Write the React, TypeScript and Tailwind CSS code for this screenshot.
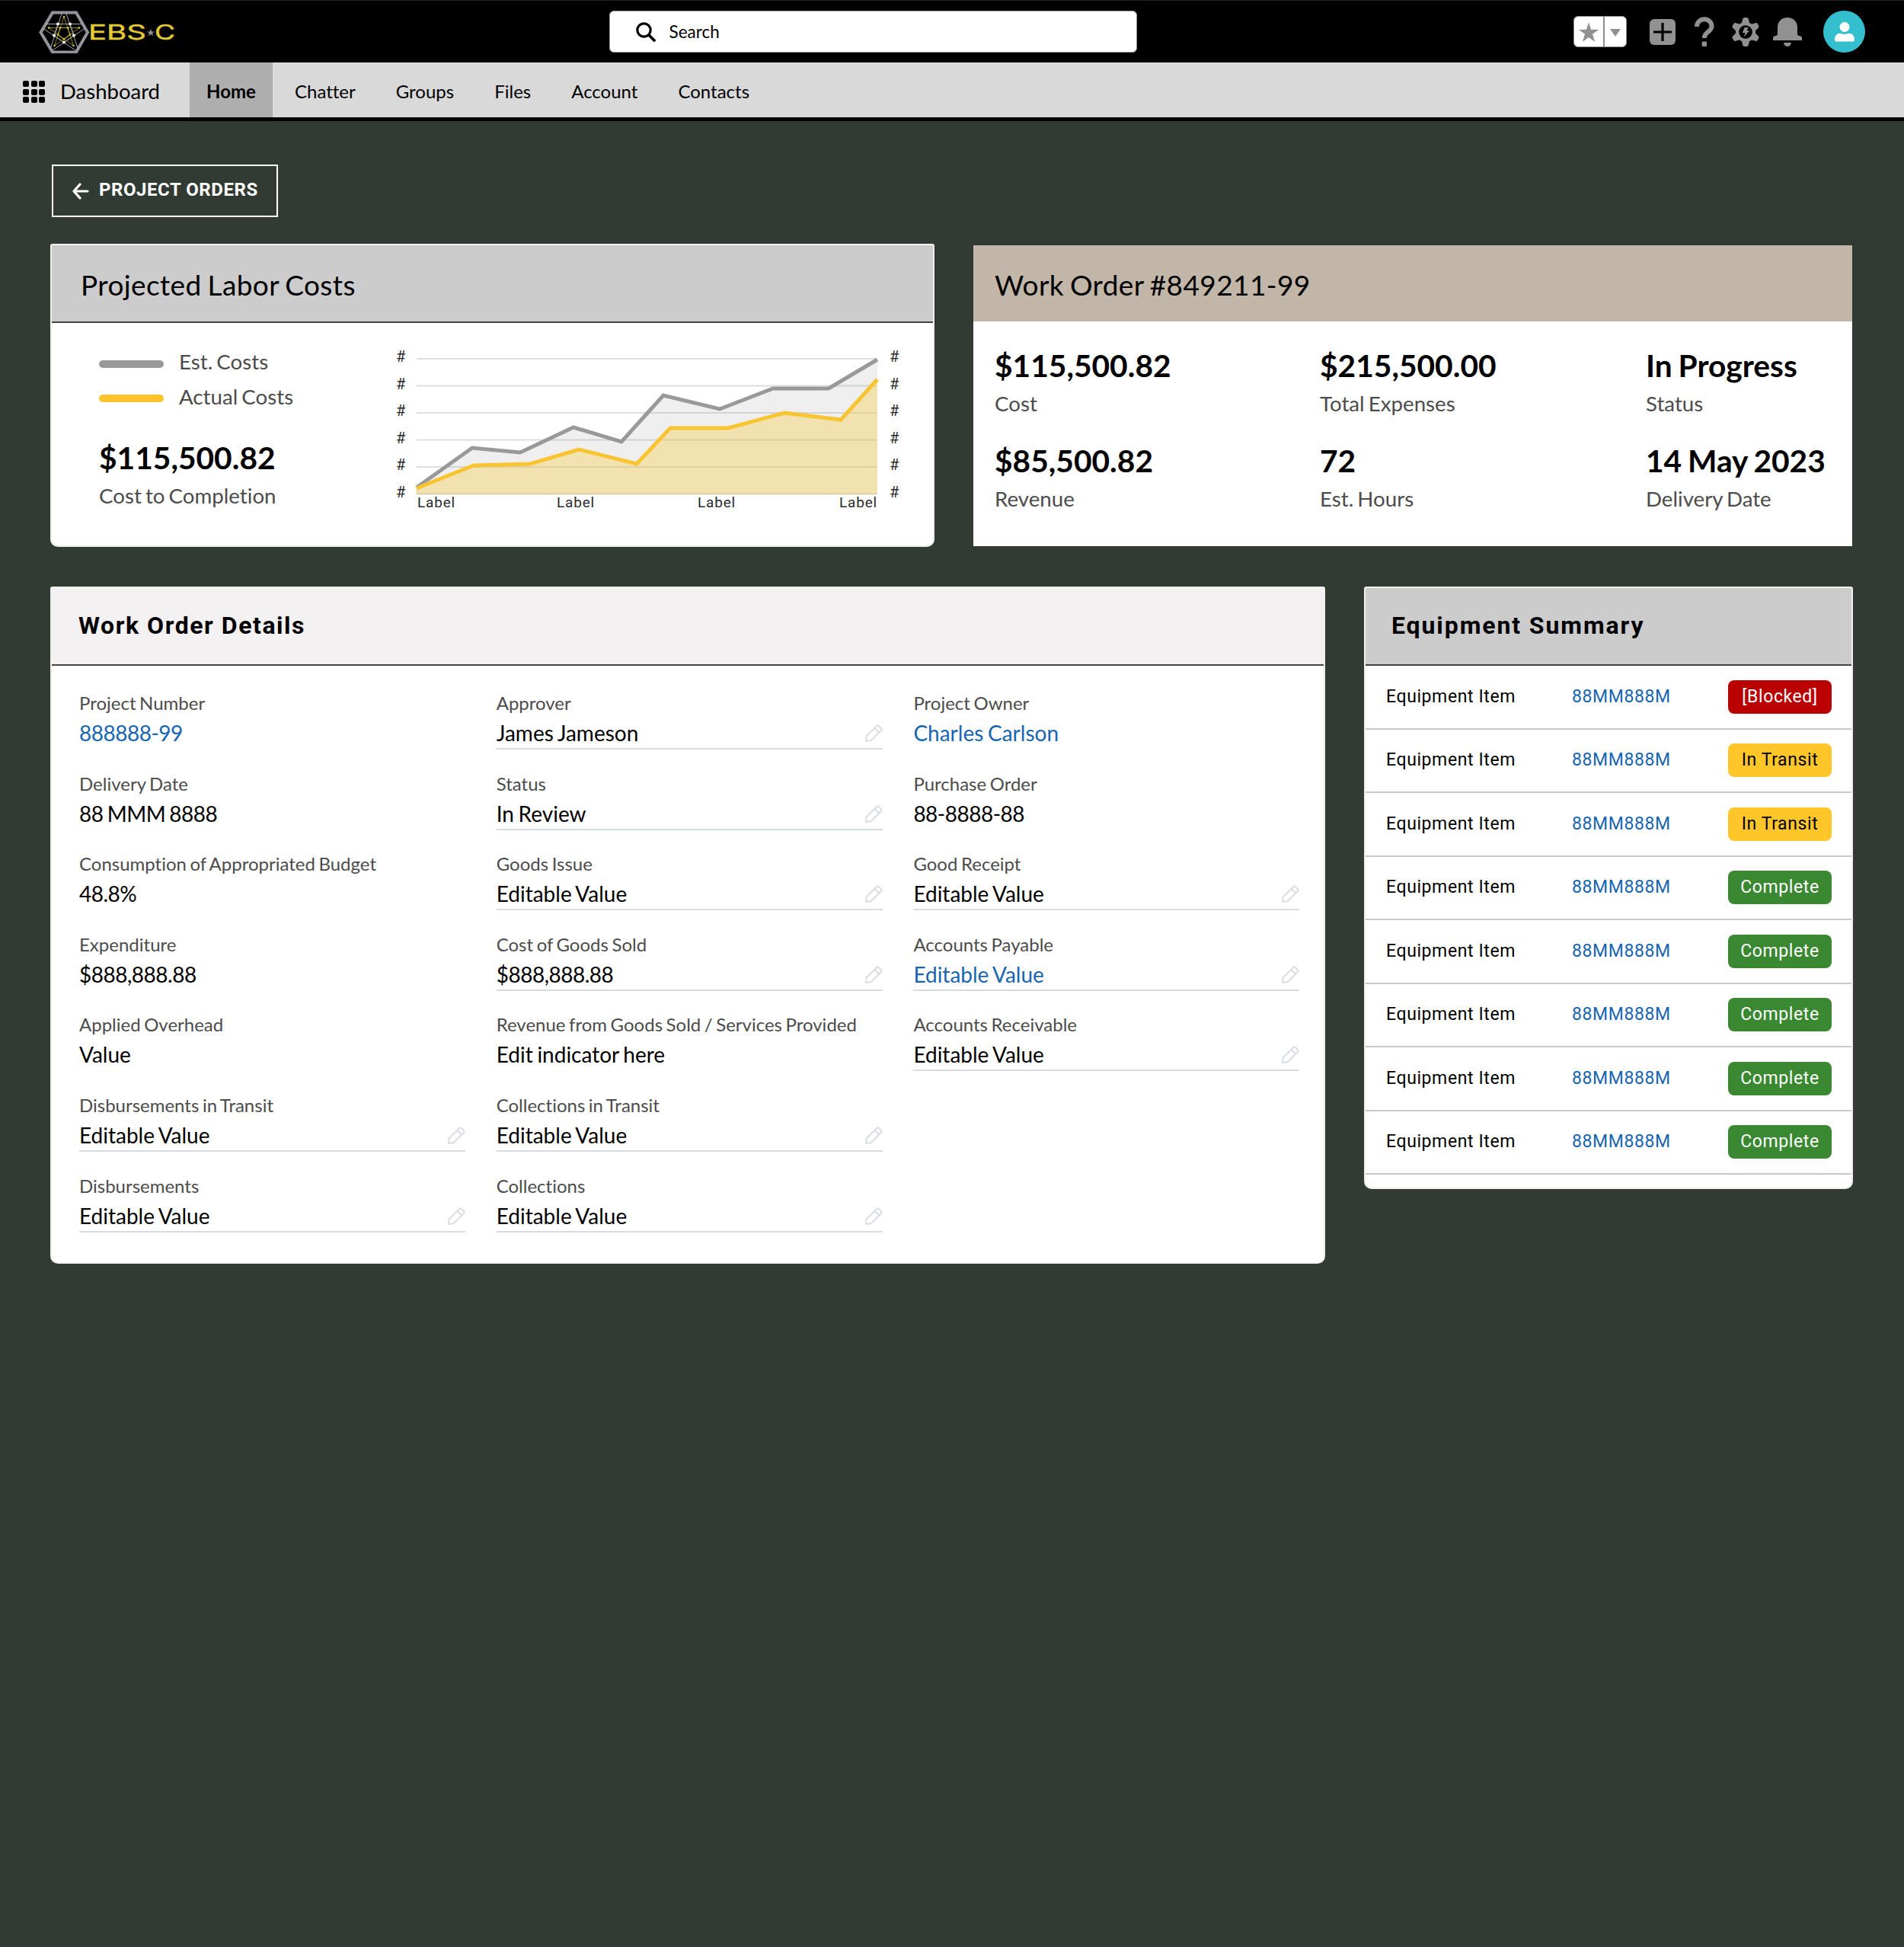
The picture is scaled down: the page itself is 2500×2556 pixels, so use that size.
import React from "react";

const navItems = ["Chatter", "Groups", "Files", "Account", "Contacts"];

const orderStats = [
  { value: "$115,500.82", label: "Cost" },
  { value: "$215,500.00", label: "Total Expenses" },
  { value: "In Progress", label: "Status" },
  { value: "$85,500.82", label: "Revenue" },
  { value: "72", label: "Est. Hours" },
  { value: "14 May 2023", label: "Delivery Date" },
];

type FieldProps = {
  label: string;
  value: string;
  link?: boolean;
  line?: boolean;
  edit?: boolean;
};

const columns: FieldProps[][] = [
  [
    { label: "Project Number", value: "888888-99", link: true },
    { label: "Delivery Date", value: "88 MMM 8888" },
    { label: "Consumption of Appropriated Budget", value: "48.8%" },
    { label: "Expenditure", value: "$888,888.88" },
    { label: "Applied Overhead", value: "Value" },
    { label: "Disbursements in Transit", value: "Editable Value", line: true, edit: true },
    { label: "Disbursements", value: "Editable Value", line: true, edit: true },
  ],
  [
    { label: "Approver", value: "James Jameson", line: true, edit: true },
    { label: "Status", value: "In Review", line: true, edit: true },
    { label: "Goods Issue", value: "Editable Value", line: true, edit: true },
    { label: "Cost of Goods Sold", value: "$888,888.88", line: true, edit: true },
    { label: "Revenue from Goods Sold / Services Provided", value: "Edit indicator here" },
    { label: "Collections in Transit", value: "Editable Value", line: true, edit: true },
    { label: "Collections", value: "Editable Value", line: true, edit: true },
  ],
  [
    { label: "Project Owner", value: "Charles Carlson", link: true },
    { label: "Purchase Order", value: "88-8888-88" },
    { label: "Good Receipt", value: "Editable Value", line: true, edit: true },
    { label: "Accounts Payable", value: "Editable Value", link: true, line: true, edit: true },
    { label: "Accounts Receivable", value: "Editable Value", line: true, edit: true },
  ],
];

const equipment = [
  "[Blocked]",
  "In Transit",
  "In Transit",
  "Complete",
  "Complete",
  "Complete",
  "Complete",
  "Complete",
];

const badgeColors: Record<string, string> = {
  "[Blocked]": "bg-[#ba0202] text-white",
  "In Transit": "bg-[#fec629] text-black",
  Complete: "bg-[#3a8832] text-white",
};

const Logo = () => (
  <svg width="180" height="56" viewBox="51 13 180 56" className="shrink-0">
    <polygon points="53.5,41.5 69,15.5 100,15.5 115,41.5 100,67.5 69,67.5" fill="none" stroke="#93949b" strokeWidth="4" />
    <g stroke="#b5b5b5" strokeWidth="0.9" fill="none">
      <path d="M60 30.5H108M81 17L66.500 62M87 17L102 62M57 36.500L99 65M111 36.500L69 65" />
      <path d="M76 30.500L71 45.500L84 54.500L97 45.500L92 30.500" />
    </g>
    <path d="M84 21L71.500 59L104 35.500H64L96.500 59Z" fill="none" stroke="#8f7f22" strokeWidth="1" />
    <path d="M79 35.500H89L92 44.500L84 50.500L76 44.500Z" fill="none" stroke="#b8a428" strokeWidth="1.1" />
    <g fill="#e6cf35">
      {[[84, 21], [64, 35.5], [104, 35.5], [71.5, 59], [96.5, 59], [79, 35.5], [89, 35.5], [76, 44.5], [92, 44.5], [84, 50.5]].map(([x, y]) => (
        <circle key={`${x}-${y}`} cx={x} cy={y} r="1.2" />
      ))}
    </g>
    <g fill="#ffffff">
      {[[76, 30.5], [92, 30.5], [71, 45.5], [97, 45.5], [84, 54.5]].map(([x, y]) => (
        <circle key={`${x}-${y}`} cx={x} cy={y} r="1.9" />
      ))}
    </g>
    <g fill="#e3c935" stroke="#e3c935" strokeWidth="0.4" fontFamily="Inter, sans-serif" fontSize="27">
      <text x="116" y="51" textLength="76" lengthAdjust="spacingAndGlyphs">EBS</text>
      <text x="203" y="51" textLength="27" lengthAdjust="spacingAndGlyphs">C</text>
    </g>
    <polygon points="198,37 199.300,40.400 203,40.500 200.100,42.700 201.200,46.200 198,44.100 194.800,46.200 195.900,42.700 193,40.500 196.700,40.400" fill="#8c8c8c" />
  </svg>
);

const HeaderIcons = () => (
  <div className="flex items-center">
    <div className="flex h-[41px] w-[70px] rounded-[6px] border border-[#8f8f8f] bg-white">
      <div className="flex w-[40px] items-center justify-center border-r-2 border-[#8f8f8f]">
        <svg width="26" height="26" viewBox="0 0 26 26" fill="#919191">
          <polygon points="13,0 16,9.700 26,9.900 18,15.800 21.200,26 13,20 4.800,26 8,15.800 0,9.900 10,9.700" />
        </svg>
      </div>
      <div className="flex flex-1 items-center justify-center pt-0.5">
        <svg width="14" height="10" viewBox="0 0 14 10" fill="#919191">
          <polygon points="0,0 14,0 7,10" />
        </svg>
      </div>
    </div>
    <svg width="34" height="34" viewBox="0 0 34 34" className="ml-[30px]">
      <rect width="34" height="34" rx="6" fill="#919191" />
      <path d="M17 5v24M5 17h24" stroke="#000" strokeWidth="3.200" />
    </svg>
    <svg width="26" height="40" viewBox="0 0 26 40" className="ml-[25px]">
      <path d="M3 13C3 7 7.500 3.300 13 3.300S22.500 7.500 22.500 12.500C22.500 20 12.800 19.500 12.800 28" fill="none" stroke="#919191" strokeWidth="6" />
      <rect x="9.700" y="32.500" width="6.300" height="6.500" rx="1" fill="#919191" />
    </svg>
    <svg width="38" height="40" viewBox="-19 -20 38 40" className="ml-[22px]">
      {[0, 60, 120, 180, 240, 300].map((a) => (
        <path key={a} d="M-5.500 -10L-3.800 -17Q-3.400 -19 -1.500 -19H1.500Q3.400 -19 3.800 -17L5.500 -10Z" transform={`rotate(${a})`} fill="#919191" />
      ))}
      <circle r="13" fill="#919191" />
      <circle r="8.800" fill="#000" />
      <path d="M-1.200 -6H3.500L1.600 -1.800H5L-2.200 6.500L-0.400 1H-4.200Z" fill="#919191" />
    </svg>
    <svg width="38" height="40" viewBox="0 0 38 40" className="ml-[17px]">
      <path d="M19 1C26.500 1 32 6.300 32 13.500V22C32 24.500 33 25 36 25.300Q38 25.800 38 28V31H0V28Q0 25.800 2 25.300C5 25 6 24.500 6 22V13.500C6 6.300 11.500 1 19 1Z" fill="#919191" />
      <path d="M14 34H24Q23 39 19 39T14 34Z" fill="#919191" />
    </svg>
    <div className="ml-[28px] flex size-[55px] items-center justify-center rounded-full bg-[#34bfce]">
      <svg width="26" height="26" viewBox="0 0 26 26" fill="#fff">
        <circle cx="13" cy="6.500" r="6.500" />
        <path d="M0 23C0 17 4 14.800 7.500 14.800C9.500 16.200 16.500 16.200 18.500 14.800C22 14.800 26 17 26 23Q26 25.500 23.500 25.500H2.500Q0 25.500 0 23Z" />
      </svg>
    </div>
  </div>
);

const CostChart = () => {
  const gridY = [471, 506.5, 542, 577.5, 613, 648.5];
  const est = "547,640 620,588 683,594 753,561 816,580 871,519 945,537 1015,510 1088,510 1152,472";
  const actual = "547,641 622,611 696,609 760,590 836,609 880,562 956,562 1030,542 1104,551 1152,498";
  return (
    <svg width="678" height="230" viewBox="512 450 678 230">
      {gridY.map((y) => (
        <path key={y} d={`M547 ${y}H1151`} stroke="#dedede" strokeWidth="2" />
      ))}
      <polygon points={`${est} 1152,649 546,649`} fill="#999999" fillOpacity="0.16" />
      <polygon points={`${actual} 1152,649 546,649`} fill="#f7c935" fillOpacity="0.34" />
      <polyline points={est} fill="none" stroke="#999999" strokeWidth="5" />
      <polyline points={actual} fill="none" stroke="#f9c432" strokeWidth="5" />
      <g fontFamily="Roboto, sans-serif" fontSize="19" fill="#2b2b2b">
        {gridY.map((y) => (
          <React.Fragment key={y}>
            <text x="520" y={y + 4} fontSize="20">#</text>
            <text x="1168" y={y + 4} fontSize="20">#</text>
          </React.Fragment>
        ))}
        {[548, 731, 916, 1102].map((x) => (
          <text key={x} x={x} y="666" letterSpacing="0.8">Label</text>
        ))}
      </g>
    </svg>
  );
};

const Pencil = () => (
  <svg width="23" height="23" viewBox="0 0 23 23" fill="none" stroke="#dadde2" strokeWidth="2" strokeLinejoin="round">
    <path d="M1.500 15.500L15.500 1.700Q16.500 .900 17.500 1.700L21.300 5.500Q22 6.500 21.300 7.500L7.500 21.300L1 22Z" />
    <path d="M12.500 4.700L18.300 10.500" />
  </svg>
);

const Field = ({ label, value, link, line, edit }: FieldProps) => (
  <div className="h-[105.6px]">
    <div className="h-[30px] text-[24px] leading-[30px] whitespace-nowrap text-[#4c4c4c] [word-spacing:-1.6px]">{label}</div>
    <div className={`mt-[5px] flex h-[41px] items-center justify-between border-b-2 ${line ? "border-[#d9dde3]" : "border-transparent"}`}>
      <span
        className={`text-[28px] leading-[39px] [word-spacing:-1.5px] ${/^[$\d]/.test(value) ? "tracking-[-0.5px]" : ""} ${link ? "text-[#1765b0]" : "text-black"}`}
      >
        {value}
      </span>
      {edit && <Pencil />}
    </div>
  </div>
);

const App = () => {
  return (
    <div className="min-h-[2556px] w-[2500px] bg-[#323b33] font-[Lato,sans-serif] text-black [font-variant-ligatures:none]">
      <header className="flex h-[82px] items-center justify-between border-t border-[#222] bg-black pr-[51px] pl-[51px]">
        <Logo />
        <div className="ml-[-5px] flex h-[55px] w-[693px] items-center rounded-[6px] border border-[#999] bg-white pl-[34px]">
          <svg width="26" height="26" viewBox="0 0 26 26" fill="none" stroke="#000">
            <circle cx="10.500" cy="10.500" r="8.700" strokeWidth="3.200" />
            <path d="M17 17L24 24" strokeWidth="3.800" strokeLinecap="round" />
          </svg>
          <span className="ml-[18px] text-[22.5px]">Search</span>
        </div>
        <HeaderIcons />
      </header>

      <nav className="flex h-[77px] border-b-[5px] border-black bg-[#d9d9d9] text-[24px]">
        <div className="flex w-[249px] items-center pl-[30px]">
          <div className="mt-[5px] grid grid-cols-3 gap-[2.5px]">
            {Array.from({ length: 9 }, (_, i) => (
              <div key={i} className="size-[8px] rounded-[2px] bg-black" />
            ))}
          </div>
          <span className="ml-[20px] pt-1 text-[27.5px]">Dashboard</span>
        </div>
        <div className="flex w-[109px] items-center justify-center bg-[#aeaeae] pt-1 font-bold">Home</div>
        <div className="flex items-center gap-[53px] pt-1 pl-[29px]">
          {navItems.map((item) => (
            <span key={item}>{item}</span>
          ))}
        </div>
      </nav>

      <main className="pt-[57px] pr-[67px] pl-[66px]">
        <button className="ml-[2px] flex h-[69px] w-[297px] items-center border-2 border-white pl-[25px] font-[Roboto,sans-serif] text-[24px] font-bold text-white">
          <svg width="22" height="22" viewBox="0 0 22 22" fill="none" stroke="#fff" strokeWidth="3.200" strokeLinecap="round" strokeLinejoin="round">
            <path d="M10 2L2 11L10 20M2.500 11H20" />
          </svg>
          <span className="ml-[13px] pb-[3px] tracking-[0.55px] whitespace-nowrap">PROJECT ORDERS</span>
        </button>

        <div className="mt-[35px] flex gap-[51px]">
          <section className="h-[398px] w-[1161px] overflow-hidden rounded-t-[3px] rounded-b-[10px] border-2 border-[#efefef] bg-white">
            <h2 className="flex h-[102px] items-center border-b-2 border-[#444] bg-[#cccccc] pt-1 pl-[38px] text-[37px] tracking-[0.4px] [word-spacing:-2px]">
              Projected Labor Costs
            </h2>
            <div className="flex pl-[62px]">
              <div className="w-[382px] pt-[31px] text-[27.7px] text-[#4c4c4c] [word-spacing:-2px]">
                <div className="flex h-[45px] items-center">
                  <div className="h-[10px] w-[85px] rounded-full bg-[#999999]" />
                  <span className="-mt-1.5 ml-[20px]">Est. Costs</span>
                </div>
                <div className="flex h-[45px] items-center">
                  <div className="h-[10px] w-[85px] rounded-full bg-[#fcc42c]" />
                  <span className="-mt-1 ml-[20px]">Actual Costs</span>
                </div>
                <div className="mt-[32px] text-[40.7px] leading-[48px] font-bold text-black">$115,500.82</div>
                <div className="mt-2 leading-[36px]">Cost to Completion</div>
              </div>
              <div className="pt-[26px]">
                <CostChart />
              </div>
            </div>
          </section>

          <section className="mt-[2px] h-[395px] w-[1154px] bg-white">
            <h2 className="flex h-[100px] items-center bg-[#c1b6a8] pt-1 pl-[28px] text-[37px] tracking-[0.4px] [word-spacing:-2px]">
              Work Order #849211-99
            </h2>
            <div className="grid grid-cols-[427px_428px_1fr] pt-[34px] pl-[28px]">
              {orderStats.map((s) => (
                <div key={s.label} className="h-[124.5px] whitespace-nowrap [word-spacing:-2px]">
                  <div className="text-[40.7px] leading-[48px] font-bold">{s.value}</div>
                  <div className="mt-[7px] text-[27.7px] leading-[37px] text-[#4c4c4c]">{s.label}</div>
                </div>
              ))}
            </div>
          </section>
        </div>

        <div className="mt-[52px] flex items-start gap-[51px]">
          <section className="h-[889px] w-[1674px] overflow-hidden rounded-t-[3px] rounded-b-[10px] border-2 border-[#efefef] bg-white">
            <h2 className="flex h-[102px] items-center border-b-2 border-[#444] bg-[#f3f1f1] pb-[2px] pl-[35px] font-[Roboto,sans-serif] text-[32px] font-bold tracking-[1.55px]">
              Work Order Details
            </h2>
            <div className="flex gap-[40.7px] pt-[34px] pl-[36px]">
              {columns.map((fields, i) => (
                <div key={i} className="w-[507px]">
                  {fields.map((f) => (
                    <Field key={f.label} {...f} />
                  ))}
                </div>
              ))}
            </div>
          </section>

          <section className="h-[791px] w-[642px] overflow-hidden rounded-t-[3px] rounded-b-[10px] border-2 border-[#efefef] bg-white font-[Roboto,sans-serif]">
            <h2 className="flex h-[102px] items-center border-b-2 border-[#444] bg-[#cccccc] pb-[2px] pl-[34px] text-[32px] font-bold tracking-[1.9px]">
              Equipment Summary
            </h2>
            {equipment.map((status, i) => (
              <div key={i} className="flex h-[83.5px] items-center border-b-2 border-[#c9c9c9] pr-[26px] pl-[27px] text-[23px] tracking-[0.6px]">
                <span className="w-[244px]">Equipment Item</span>
                <span className="flex-1 text-[#1765b0]">88MM888M</span>
                <span className={`flex h-[44px] w-[136px] items-center justify-center rounded-[8px] ${badgeColors[status]}`}>{status}</span>
              </div>
            ))}
          </section>
        </div>
      </main>
    </div>
  );
};

export default App;
